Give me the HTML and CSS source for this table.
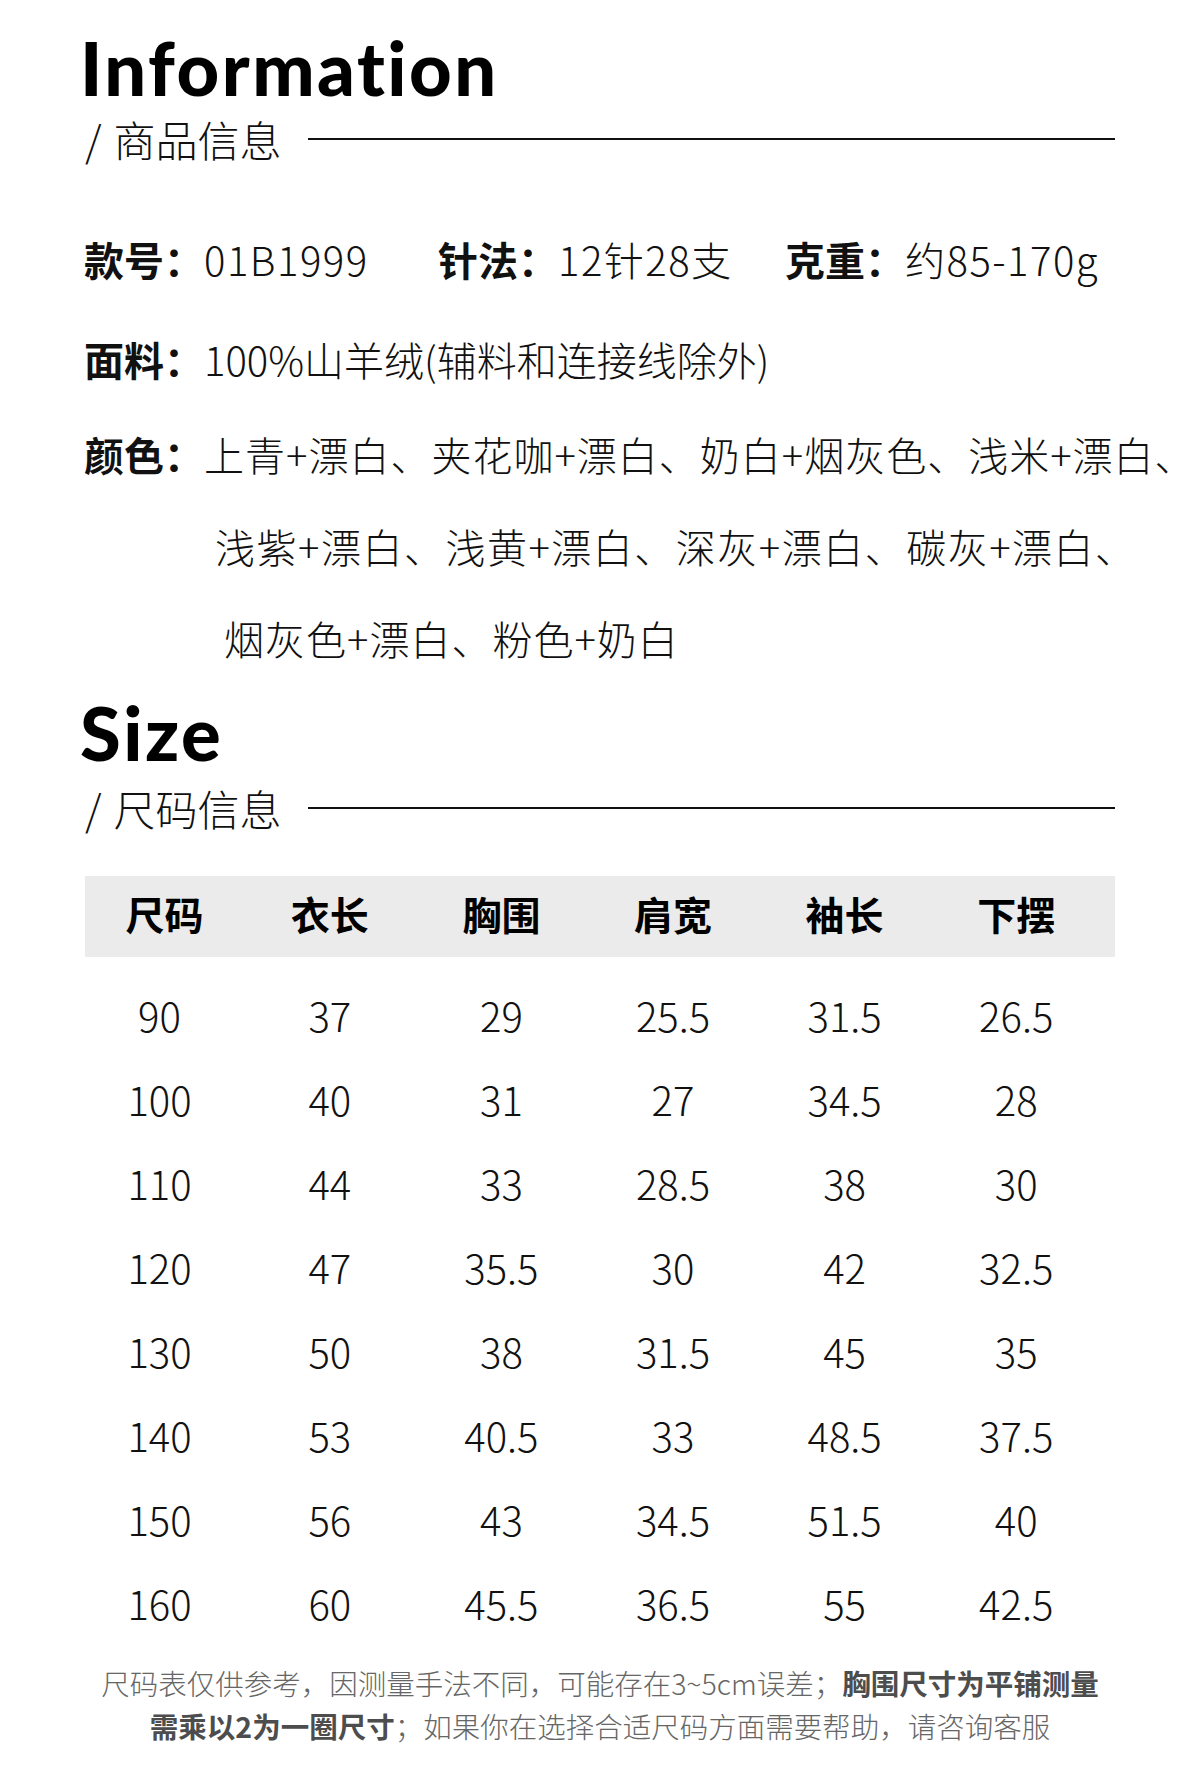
FILE: index.html
```html
<!DOCTYPE html>
<html lang="zh-CN">
<head>
<meta charset="utf-8">
<title>Information / Size</title>
<link rel="stylesheet" href="styles.css">
</head>
<body>
<main class="page">
  <section class="info">
    <h1 class="title title-info">Information</h1>
    <div class="sub"><span class="slash">/</span><span class="sub-text">商品信息</span><span class="rule"></span></div>
    <div class="specs">
      <div class="spec spec-1"><b>款号：</b><span class="num">01B1999</span></div>
      <div class="spec spec-2"><b>针法：</b><span class="num">12针28支</span></div>
      <div class="spec spec-3"><b>克重：</b><span class="num">约85-170g</span></div>
    </div>
    <div class="row fabric"><b>面料：</b>100%山羊绒(辅料和连接线除外)</div>
    <div class="row colors">
      <b class="colors-label">颜色：</b>
      <div class="color-lines">
        <div class="cl cl-1">上青+漂白、夹花咖+漂白、奶白+烟灰色、浅米+漂白、</div>
        <div class="cl cl-2">浅紫+漂白、浅黄+漂白、深灰+漂白、碳灰+漂白、</div>
        <div class="cl cl-3">烟灰色+漂白、粉色+奶白</div>
      </div>
    </div>
  </section>

  <section class="size">
    <h2 class="title title-size">Size</h2>
    <div class="sub sub-size"><span class="slash">/</span><span class="sub-text">尺码信息</span><span class="rule"></span></div>

    <div class="table">
      <div class="thead">
        <div>尺码</div><div>衣长</div><div>胸围</div><div>肩宽</div><div>袖长</div><div>下摆</div>
      </div>
      <div class="tr"><div class="c1">90</div><div>37</div><div>29</div><div>25.5</div><div>31.5</div><div>26.5</div></div>
      <div class="tr"><div class="c1">100</div><div>40</div><div>31</div><div>27</div><div>34.5</div><div>28</div></div>
      <div class="tr"><div class="c1">110</div><div>44</div><div>33</div><div>28.5</div><div>38</div><div>30</div></div>
      <div class="tr"><div class="c1">120</div><div>47</div><div>35.5</div><div>30</div><div>42</div><div>32.5</div></div>
      <div class="tr"><div class="c1">130</div><div>50</div><div>38</div><div>31.5</div><div>45</div><div>35</div></div>
      <div class="tr"><div class="c1">140</div><div>53</div><div>40.5</div><div>33</div><div>48.5</div><div>37.5</div></div>
      <div class="tr"><div class="c1">150</div><div>56</div><div>43</div><div>34.5</div><div>51.5</div><div>40</div></div>
      <div class="tr"><div class="c1">160</div><div>60</div><div>45.5</div><div>36.5</div><div>55</div><div>42.5</div></div>
    </div>

    <div class="note">
      <p>尺码表仅供参考，因测量手法不同，可能存在3~5cm误差；<b>胸围尺寸为平铺测量</b></p>
      <p><b>需乘以2为一圈尺寸</b>；如果你在选择合适尺码方面需要帮助，请咨询客服</p>
    </div>
  </section>
</main>
</body>
</html>
```

FILE: styles.css
```css
html, body {
  margin: 0;
  padding: 0;
  background: #ffffff;
}

body {
  font-family: "Noto Sans CJK SC", "Noto Sans", sans-serif;
  color: #111111;
  width: 1200px;
  overflow: hidden;
}

.page {
  padding: 0 85px;
}

.title {
  margin: 0 0 0 -5px;
  font-family: "Lato", "Noto Sans", sans-serif;
  font-weight: 900;
  font-size: 74px;
  line-height: 74px;
  color: #000000;
  letter-spacing: 2.5px;
  font-variant-ligatures: none;
  font-feature-settings: "liga" 0;
}

.title-info {
  margin-top: 31px;
}

.sub {
  display: flex;
  align-items: center;
  height: 42px;
  margin-top: 13px;
  font-size: 42px;
  line-height: 42px;
  font-weight: 300;
  color: #111111;
}

.slash {
  margin-right: 12px;
}

.rule {
  flex: 1;
  height: 2px;
  background: #111111;
  margin-left: 26px;
}

.specs {
  display: flex;
  margin-top: 79px;
  font-size: 40px;
  line-height: 40px;
  font-weight: 300;
  white-space: nowrap;
}

.spec b,
.row b {
  font-weight: 700;
}

.num {
  letter-spacing: 1.5px;
}

.spec-1 { width: 354px; margin-left: -1px; }
.spec-2 { width: 347px; }

.row {
  font-size: 40px;
  font-weight: 300;
  line-height: 40px;
  margin-left: -1px;
  white-space: nowrap;
}

.fabric {
  margin-top: 60px;
}

.colors {
  display: flex;
  margin-top: 29px;
  line-height: 92px;
}

.colors-label {
  flex: none;
}

.cl {
  letter-spacing: 1px;
}

.cl-2 { padding-left: 11px; letter-spacing: 1.5px; }
.cl-3 { padding-left: 20px; }

.title-size {
  margin-top: 12px;
}

.sub-size {
  margin-top: 17px;
}

.table {
  margin-top: 47px;
}

.thead,
.tr {
  display: grid;
  grid-template-columns: 159px repeat(5, 1fr);
  padding-right: 13px;
  text-align: center;
}

.thead {
  height: 81px;
  background: #ebebeb;
  font-size: 39px;
  font-weight: 700;
  line-height: 75px;
  color: #000000;
}

.tr {
  height: 84px;
  font-size: 40px;
  font-weight: 300;
  line-height: 84px;
  color: #111111;
}

.thead + .tr {
  margin-top: 16px;
}

.tr .c1 {
  padding-right: 10px;
}

.note {
  margin: 16px -85px 0;
  text-align: center;
  font-size: 28.5px;
  line-height: 43px;
  font-weight: 300;
  color: #666666;
  white-space: nowrap;
}

.note p {
  margin: 0;
}

.note b {
  font-weight: 700;
  color: #4d4d4d;
}
```
